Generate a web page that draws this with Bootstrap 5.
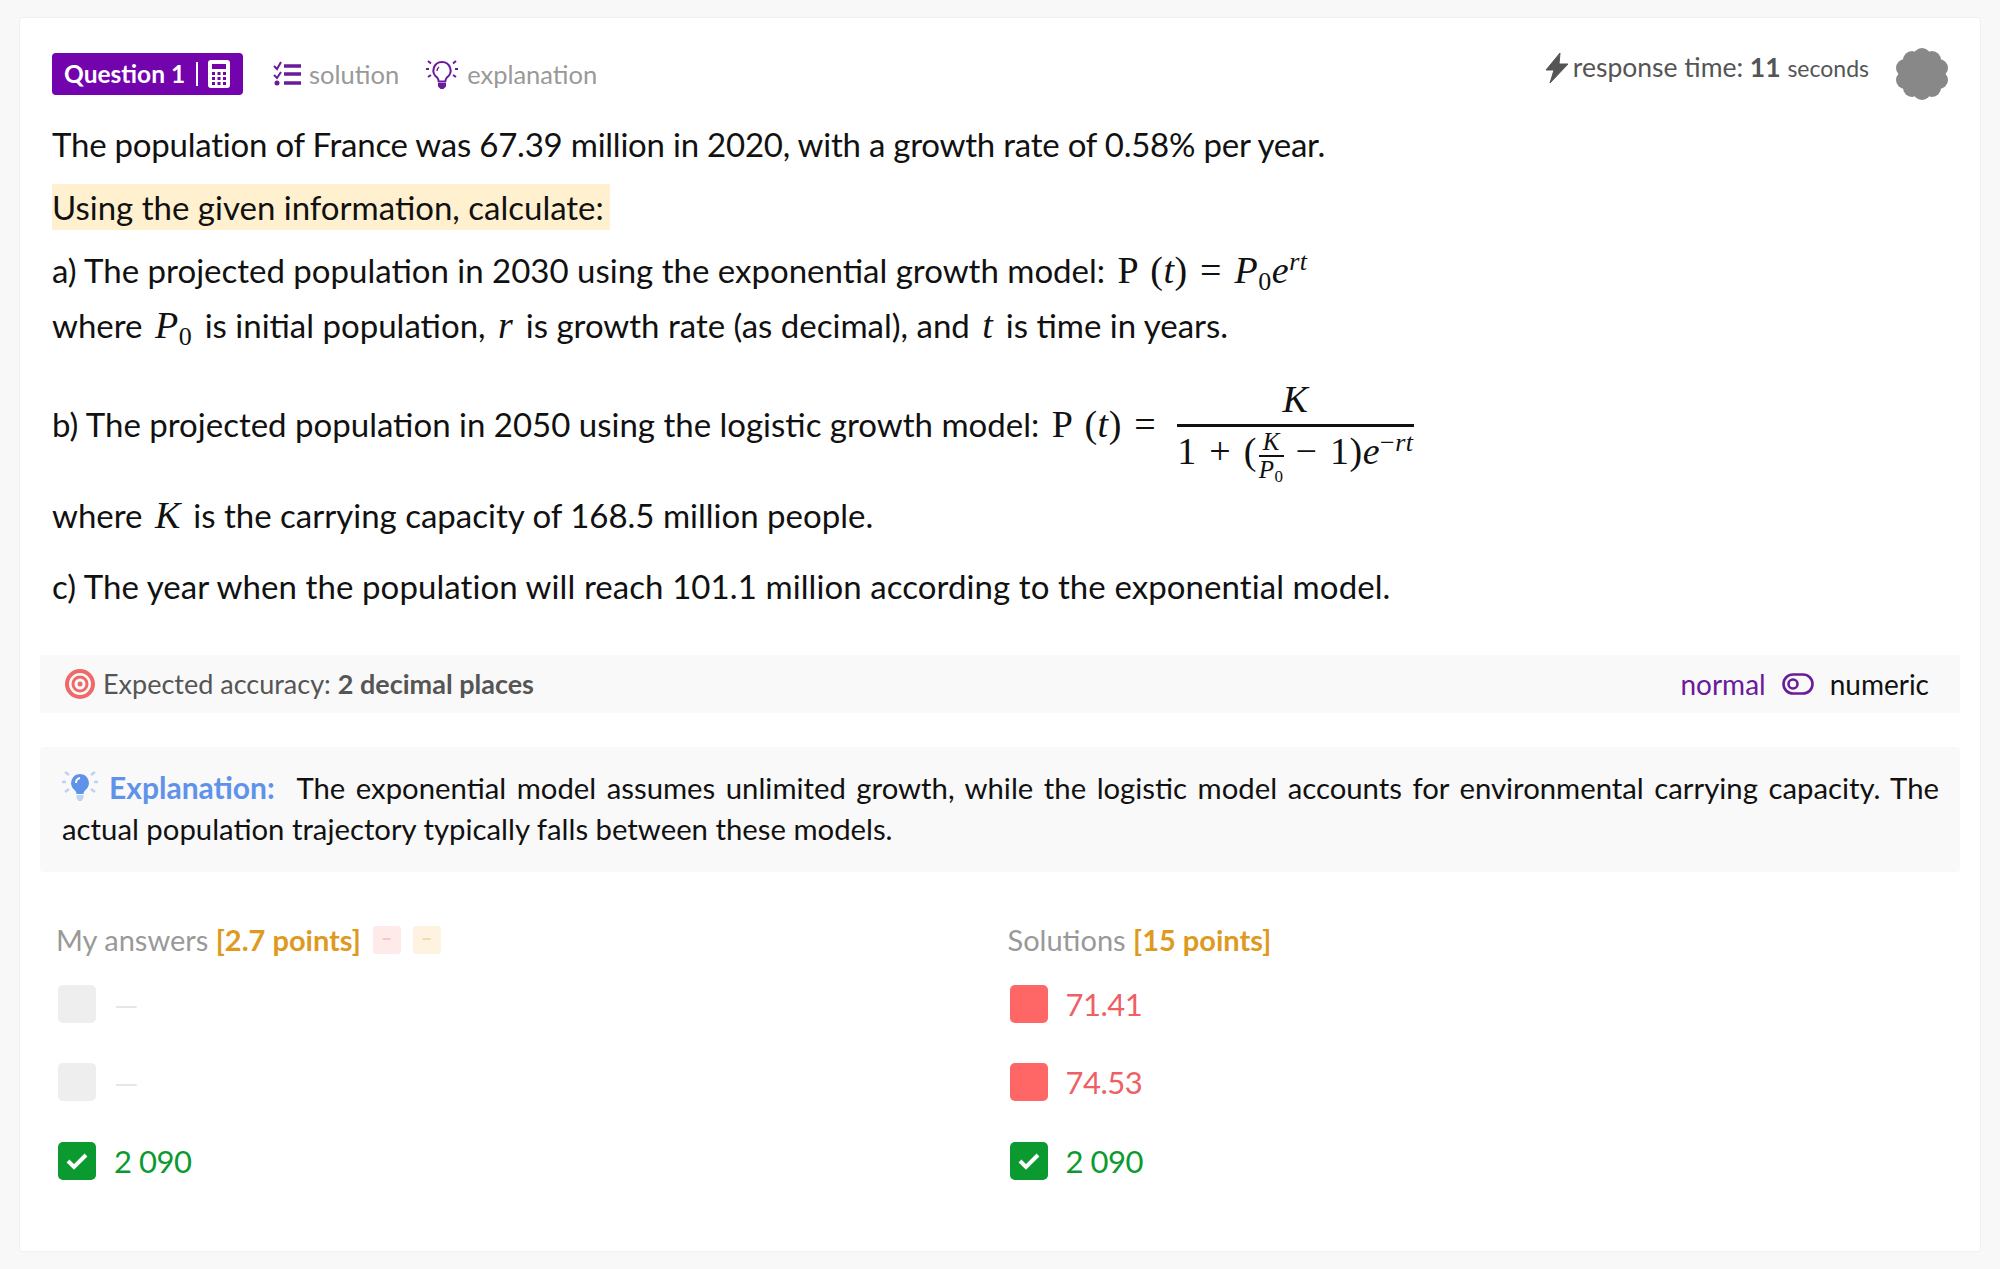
<!DOCTYPE html>
<html lang="en">
<head>
  <meta charset="UTF-8" />
  <meta name="viewport" content="width=device-width, initial-scale=1" />
  <title>Question 1</title>
  <link href="https://cdn.jsdelivr.net/npm/bootstrap@5.3.0/dist/css/bootstrap.min.css" rel="stylesheet" />
  <style>
    body {
      background: #f8f8f8;
      font-family: "Lato", "Noto Sans", sans-serif;
      color: #111;
      padding: 17px 19px 19px;
    }
    .q-card {
      background: #fff;
      border: 1px solid #f0f0f0;
      border-radius: 3px;
      height: 1235px;
      padding: 35px 20px 0;
    }
    .q-head { height: 42px; padding: 0 12px; }
    .q-badge {
      background: #7303ad;
      color: #fff;
      font-size: 24.5px;
      font-weight: 700;
      height: 42px;
      width: 191px;
      border-radius: 4px;
      padding: 0 12px;
    }
    .q-badge i { display: block; width: 2px; height: 24px; background: #fff; margin: 0 10px 0 11px; }
    .q-tool { color: #999; font-size: 25.5px; }
    .q-tool-a { margin-left: 30px; }
    .q-tool-b { margin-left: 26px; }
    .q-resp { color: #555; font-size: 26.5px; margin-top: -13px; }
    .q-resp small { font-size: 23px; }
    .q-resp b { font-weight: 700; }
    .q-blob { margin-left: 27px; }
    .q-text { padding: 0 12px; font-size: 33px; line-height: 44px; }
    .q-line { display: flex; align-items: center; white-space: nowrap; height: 44px; }
    .q-tight { letter-spacing: -0.23px; }
    .q-loose { letter-spacing: 0.08px; }
    .q-hl { background: #fff1cf; display: inline-block; height: 46px; line-height: 46px; width: 558px; white-space: nowrap; }
    .mth { font-family: "Liberation Serif", serif; font-size: 38px; white-space: nowrap; letter-spacing: 0.5px; word-spacing: 2.5px; padding: 0 4px; }
    .mth sub, .mth sup { font-size: 26px; }
    .mth em { font-style: italic; }
    .q-eq { margin-right: 13px; }
    .q-frac { display: inline-flex; flex-direction: column; align-items: center; line-height: 1; margin-top: 13px; }
    .q-frac > span:first-child { border-bottom: 3px solid #111; width: 100%; text-align: center; padding-bottom: 6px; }
    .q-frac > span:last-child { padding-top: 2px; }
    .q-mini { display: inline-flex; flex-direction: column; align-items: center; vertical-align: middle; font-size: 25px; line-height: 1; margin: 0 12px 0 2px; }
    .q-mini > span:first-child { border-bottom: 2px solid #111; width: 100%; text-align: center; padding-bottom: 1px; }
    .q-mini sub { font-size: 17px; }
    .q-panel { background: #f9f9f9; border-radius: 4px; }
    .q-acc { height: 58px; margin-top: 47px; padding: 0 31px 0 25px; font-size: 28px; color: #555; }
    .q-acc-t { font-size: 27px; }
    .q-acc b { font-weight: 700; }
    .q-norm { color: #6a1b9a; }
    .q-num { color: #111; }
    .q-expl { height: 125px; margin-top: 34px; padding: 20px 21px 0 22px; font-size: 29.3px; line-height: 41px; }
    .q-expl-first { text-align: justify; text-align-last: justify; white-space: normal; }
    .q-expl svg { margin-right: 11px; vertical-align: -6px; }
    .q-expl b { color: #5f93ea; font-weight: 700; font-size: 30px; margin-right: 12px; }
    .q-ans { margin: 49px 0 0 16px; width: 1903px; }
    .q-ans-h { color: #999; font-size: 29px; height: 38px; line-height: 38px; margin-bottom: 5.500px; }
    .q-ans-h b { color: #dd9a1f; font-weight: 700; }
    .q-mini-btn { width: 28px; height: 28px; border-radius: 3px; font-size: 18px; font-weight: 700; line-height: 26px; text-align: center; margin-left: 12px; }
    .q-row { height: 78.500px; padding-left: 2px; }
    .q-box { width: 38px; height: 38px; border-radius: 5px; margin-right: 18px; flex: none; }
    .q-val { font-size: 31px; letter-spacing: -0.5px; }
    .is-empty .q-box { background: #eee; }
    .is-empty .q-val { color: #e6e6e6; }
    .is-bad .q-box { background: #ff6666; }
    .is-bad .q-val { color: #ee5f66; }
    .is-ok .q-box { background: #0b9a2f; }
    .is-ok .q-val { color: #0b9a2f; }
  </style>
</head>
<body>
  <div class="q-card">
    <div class="q-head d-flex align-items-center">
      <div class="q-badge d-flex align-items-center">
        Question 1<i></i>
        <svg width="22" height="28" viewBox="0 0 22 28"><rect width="22" height="28" rx="3" fill="#fff"/><rect x="4" y="4" width="14" height="5" fill="#7303ad"/><g fill="#7303ad"><rect x="4" y="12" width="3" height="3"/><rect x="9.500" y="12" width="3" height="3"/><rect x="15" y="12" width="3" height="3"/><rect x="4" y="17" width="3" height="3"/><rect x="9.500" y="17" width="3" height="3"/><rect x="15" y="17" width="3" height="3"/><rect x="4" y="22" width="3" height="3"/><rect x="9.500" y="22" width="3" height="3"/><rect x="15" y="22" width="3" height="3"/></g></svg>
      </div>
      <div class="q-tool q-tool-a d-flex align-items-center">
        <svg class="me-2" width="28" height="26" viewBox="0 0 28 26" fill="none" stroke="#6a1b9a"><path d="M1 5l3 3 4-7" stroke-width="2"/><path d="M1 14l3 3 4-6" stroke-width="2"/><circle cx="4" cy="22" r="2.500" fill="#6a1b9a" stroke="none"/><path d="M11 5h17M11 13h17M11 22h17" stroke-width="3.400"/></svg>
        solution
      </div>
      <div class="q-tool q-tool-b d-flex align-items-center">
        <svg class="me-2" width="34" height="34" viewBox="0 0 34 34" fill="none" stroke="#6a1b9a" stroke-width="2"><path d="M17 5a8.500 8.500 0 0 0-5 15.400c1 1 1.500 2 1.700 4h6.600c.2-2 .7-3 1.700-4A8.500 8.500 0 0 0 17 5z"/><path d="M14 10c-1.500 1-2 2.500-2 4" stroke-width="1.400"/><path d="M14 27h6v2l-2 2h-2l-2-2z" fill="#6a1b9a"/><path d="M1 12h3M30 12h3M3 4l3 2.500M31 4l-3 2.500M3 20l3-2M31 20l-3-2"/></svg>
        explanation
      </div>
      <div class="ms-auto q-resp d-flex align-items-center">
        <svg class="me-1" width="24" height="30" viewBox="0 0 24 30"><path d="M15 0L1 17h8L5 30 23 11h-9z" fill="#555" stroke="#555" stroke-linejoin="round"/></svg>
        <span>response time: <b>11</b> <small>seconds</small></span>
      </div>
      <svg class="q-blob" width="52" height="52" viewBox="0 0 52 52" fill="#888"><circle cx="26" cy="26" r="20"/><circle cx="26" cy="9" r="9"/><circle cx="36" cy="12" r="9"/><circle cx="43" cy="20" r="9"/><circle cx="43" cy="32" r="9"/><circle cx="36" cy="40" r="9"/><circle cx="26" cy="43" r="9"/><circle cx="16" cy="40" r="9"/><circle cx="9" cy="32" r="9"/><circle cx="9" cy="20" r="9"/><circle cx="16" cy="12" r="9"/></svg>
    </div>

    <div class="q-text">
      <div class="q-line q-tight" style="margin-top:27px">The population of France was 67.39 million in 2020, with a growth rate of 0.58% per year.</div>
      <div style="margin-top:18px;height:46px"><span class="q-hl">Using the given information, calculate:</span></div>
      <div class="q-line" style="margin-top:18px">a) The projected population in 2030 using the exponential growth model:&nbsp;<span class="mth">P (<em>t</em>) = <em>P</em><sub>0</sub><em>e</em><sup><em>rt</em></sup></span></div>
      <div class="q-line" style="margin-top:11px">where&nbsp;<span class="mth"><em>P</em><sub>0</sub></span>&nbsp;is initial population,&nbsp;<span class="mth"><em>r</em></span>&nbsp;is growth rate (as decimal), and&nbsp;<span class="mth"><em>t</em></span>&nbsp;is time in years.</div>
      <div class="q-line" style="margin-top:55px">b) The projected population in 2050 using the logistic growth model:&nbsp;<span class="mth q-eq">P (<em>t</em>) =</span>
        <span class="mth q-frac"><span><em>K</em></span><span>1 + (<span class="q-mini"><span><em>K</em></span><span><em>P</em><sub>0</sub></span></span>− 1)<em>e</em><sup>−<em>rt</em></sup></span></span>
      </div>
      <div class="q-line" style="margin-top:47px">where&nbsp;<span class="mth"><em>K</em></span>&nbsp;is the carrying capacity of 168.5 million people.</div>
      <div class="q-line q-loose" style="margin-top:27px">c) The year when the population will reach 101.1 million according to the exponential model.</div>
    </div>

    <div class="q-panel q-acc d-flex align-items-center">
      <svg class="me-2" width="30" height="30" viewBox="0 0 30 30" fill="none" stroke="#ee6a6a"><circle cx="15" cy="15" r="13" stroke-width="4"/><circle cx="15" cy="15" r="7" stroke-width="3"/><circle cx="15" cy="15" r="2.500" fill="#ee6a6a" stroke="none"/></svg>
      <span class="q-acc-t">Expected accuracy: <b>2 decimal places</b></span>
      <span class="q-norm ms-auto">normal</span>
      <svg class="mx-3" width="32" height="22" viewBox="0 0 32 22" fill="none" stroke="#6a1b9a" stroke-width="2.600"><rect x="1.500" y="1.500" width="29" height="19" rx="9.500"/><circle cx="11" cy="11" r="4.500"/></svg>
      <span class="q-num">numeric</span>
    </div>

    <div class="q-panel q-expl">
      <div class="q-expl-first"><svg width="36" height="36" viewBox="0 0 36 36"><path d="M18 5a9 9 0 0 0-5.500 16c1.500 1.200 1.800 2.500 2 4h7c.2-1.500.5-2.800 2-4A9 9 0 0 0 18 5z" fill="#5f93ea"/><path d="M14.500 26h7v3l-2 3h-3l-2-3z" fill="#bcd2f6"/><path d="M0 13h4M32 13h4M3 3l4 3M33 3l-4 3M3 23l4-3M33 23l-4-3" stroke="#bcd2f6" stroke-width="2.400"/><path d="M14 14c0-3 1.500-4.500 4-5" stroke="#fff" stroke-width="2" fill="none"/></svg><b>Explanation:</b> The exponential model assumes unlimited growth, while the logistic model accounts for environmental carrying capacity. The</div>
      <div>actual population trajectory typically falls between these models.</div>
    </div>

    <div class="q-ans row g-0">
      <div class="col-6">
        <div class="q-ans-h d-flex align-items-center">
          <span>My answers <b>[2.7 points]</b></span>
          <span class="q-mini-btn" style="background:#ffeaea;color:#f8c4c4">−</span>
          <span class="q-mini-btn" style="background:#fdf3e0;color:#f3d9a4">−</span>
        </div>
        <div class="q-row is-empty d-flex align-items-center"><span class="q-box"></span><span class="q-val">—</span></div>
        <div class="q-row is-empty d-flex align-items-center"><span class="q-box"></span><span class="q-val">—</span></div>
        <div class="q-row is-ok d-flex align-items-center"><span class="q-box d-flex align-items-center justify-content-center"><svg width="22" height="18" viewBox="0 0 22 18" fill="none" stroke="#fff" stroke-width="4"><path d="M2 9l6 6L20 3"/></svg></span><span class="q-val">2 090</span></div>
      </div>
      <div class="col-6">
        <div class="q-ans-h"><span>Solutions <b>[15 points]</b></span></div>
        <div class="q-row is-bad d-flex align-items-center"><span class="q-box"></span><span class="q-val">71.41</span></div>
        <div class="q-row is-bad d-flex align-items-center"><span class="q-box"></span><span class="q-val">74.53</span></div>
        <div class="q-row is-ok d-flex align-items-center"><span class="q-box d-flex align-items-center justify-content-center"><svg width="22" height="18" viewBox="0 0 22 18" fill="none" stroke="#fff" stroke-width="4"><path d="M2 9l6 6L20 3"/></svg></span><span class="q-val">2 090</span></div>
      </div>
    </div>
  </div>
  <script src="https://cdn.jsdelivr.net/npm/bootstrap@5.3.0/dist/js/bootstrap.bundle.min.js"></script>
</body>
</html>
